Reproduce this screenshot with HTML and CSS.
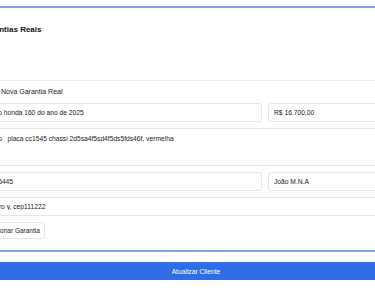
FILE: index.html
```html
<!DOCTYPE html>
<html lang="pt-BR">
<head>
    <meta charset="utf-8" />
    <meta name="viewport" content="width=device-width, initial-scale=1" />
    <title>Editar Cliente</title>
    <link rel="stylesheet" href="styles.css">
</head>
<body>
    <div class="page">
        <section class="card">
            <div class="card-header">
                <h2>Garantias Reais</h2>
            </div>

            <div class="new-guarantee">
                <h3>Nova Garantia Real</h3>

                <div class="row">
                    <input class="field" type="text" value="Moto honda 160 do ano de 2025" />
                    <input class="field" type="text" value="R$ 16.700,00" />
                </div>

                <textarea class="field area">Moto   placa cc1545 chassi 2d5sa4f5sd4f5ds5fds46f, vermelha</textarea>

                <div class="row">
                    <input class="field" type="text" value="3215445" />
                    <input class="field" type="text" value="João M.N.A" />
                </div>

                <input class="field" type="text" value="Bairro y, cep111222" />

                <button class="add-button">Adicionar Garantia</button>
            </div>
        </section>

        <button class="submit-button">Atualizar Cliente</button>
    </div>
</body>
</html>
```

FILE: styles.css
```css
body {
    font-family: "Liberation Sans", Arial, sans-serif;
    margin: 0;
    padding: 0;
    background-color: #fff;
    color: #222;
    overflow: hidden;
}

.page {
    width: 430px;
    margin-left: -19px;
    padding-top: 6px;
}

.card {
    border-top: 2px solid #7ea5ea;
    border-bottom: 2px solid #7ea5ea;
    background: #fff;
}

.card-header {
    padding: 17px 0 45px;
    border-bottom: 1px solid #eee;
}

.card-header h2 {
    font-size: 8px;
    line-height: 10px;
    font-weight: bold;
    margin: 0;
    color: #111;
}

.new-guarantee {
    display: flex;
    flex-direction: column;
    gap: 6px;
    padding: 6px 0 11px;
}

.new-guarantee h3 {
    font-size: 7px;
    line-height: 9px;
    font-weight: normal;
    margin: 0 0 1px 20px;
    color: #222;
}

.row {
    display: grid;
    grid-template-columns: 281px 1fr;
    gap: 6px;
}

.field {
    font-family: inherit;
    font-size: 6.7px;
    color: #222;
    height: 19px;
    padding: 0 5px;
    border: 1px solid #e6e6e6;
    border-radius: 3px;
    background: #fff;
    box-sizing: border-box;
    width: 100%;
    margin: 0;
    outline: none;
}

.area {
    height: 38px;
    padding: 5px 5px;
    line-height: 9px;
    resize: none;
    display: block;
}

.add-button {
    align-self: flex-start;
    font-family: inherit;
    font-size: 6.5px;
    color: #222;
    background: #fff;
    border: 1px solid #e6e6e6;
    border-radius: 3px;
    height: 17px;
    padding: 0 4px;
    margin: 0;
}

.submit-button {
    display: block;
    width: 100%;
    height: 18px;
    margin-top: 10px;
    font-family: inherit;
    font-size: 6.7px;
    color: #fff;
    background-color: #2f6de6;
    border: none;
    border-radius: 2px;
}
```
